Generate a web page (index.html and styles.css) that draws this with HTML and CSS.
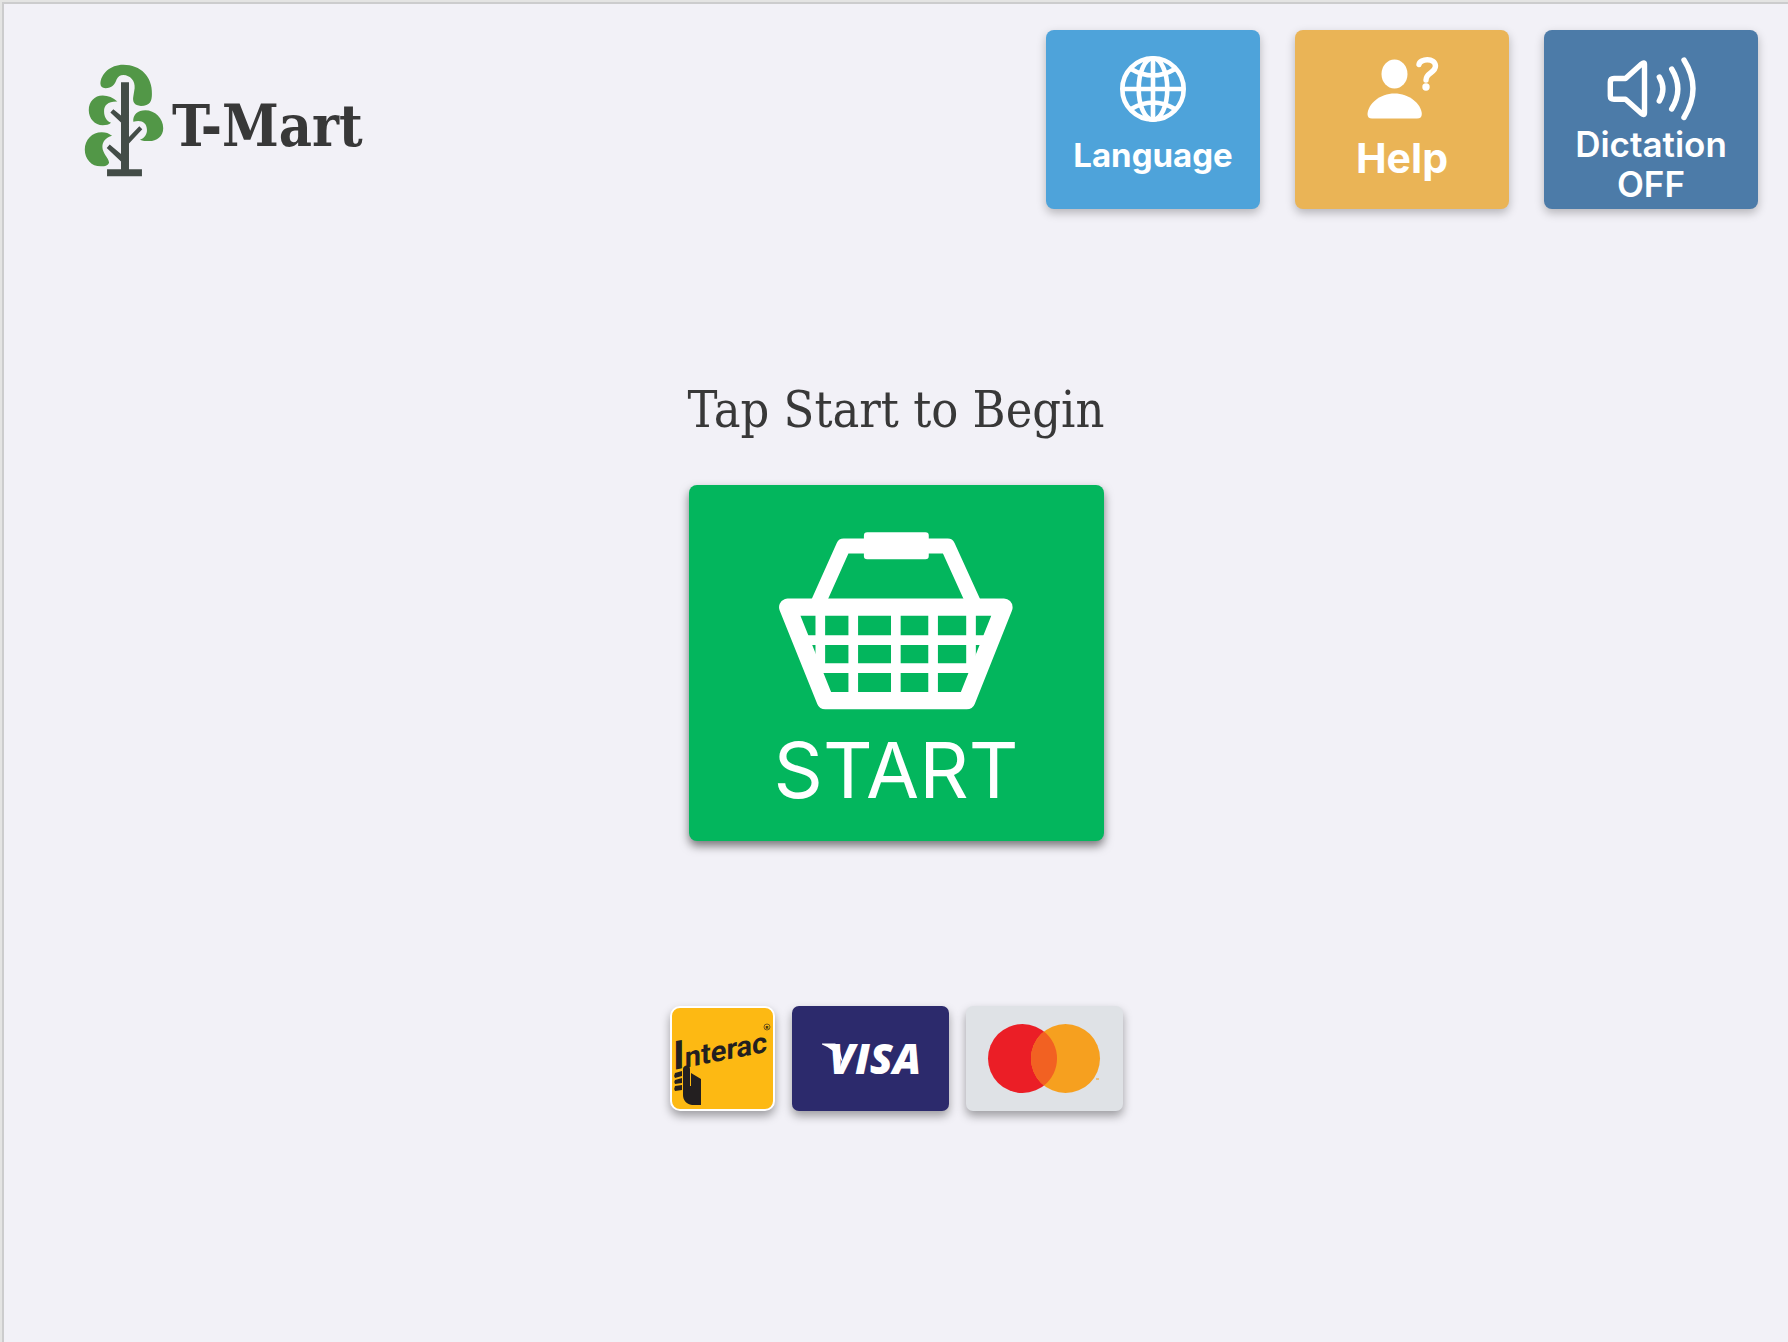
FILE: index.html
```html
<!DOCTYPE html>
<html lang="en">
<head>
<meta charset="utf-8">
<meta name="viewport" content="width=device-width, initial-scale=1">
<title>T-Mart</title>
<link rel="stylesheet" href="styles.css">
</head>
<body>
<div class="screen">
  <header class="top">
    <div class="brand">
      <svg class="brand-tree" viewBox="42 42 240 340" aria-hidden="true">
        <g fill="#529747">
          <path d="M91 101C92 72 120 44 160 44C212 44 248 80 246 132C246 154 240 168 213 168C193 168 187 155 190 140L194 115C196 92 181 76 160 75C151 75 144 79 140 88C134 104 126 115 106 115C97 115 91 110 91 101Z"/>
          <path d="M142 155C130 144 114 137 98 137C73 137 56 156 56 181C56 206 74 226 98 226C108 226 117 225 123 219C109 213 102 200 102 184C102 166 114 154 142 155Z"/>
          <path d="M190 216C188 194 204 181 226 181C255 181 280 205 280 235C280 260 260 274 238 274C227 274 218 274 210 270C224 265 232 253 231 239C230 217 213 209 190 216Z"/>
          <path d="M126 258C116 250 108 247 95 247C66 247 44 269 44 299C44 328 64 350 92 350C106 350 115 346 117 338C116 326 97 310 97 292C97 276 107 263 126 258Z"/>
        </g>
        <path fill="#434c47" d="M153 97H177V262L208 229L217 238L177 281V359H216V380H111V359H153V335L110 295L119 284L153 313V218L121 188L130 178L153 197Z"/>
      </svg>
      <span class="brand-name">T-Mart</span>
    </div>
    <nav class="actions" aria-label="Assistance">
      <button type="button" class="tile tile-language">
        <svg class="tile-icon" viewBox="0 0 100 70" fill="none" stroke="#fff" stroke-width="4.6" aria-hidden="true">
          <circle cx="50" cy="35" r="30.7"/>
          <ellipse cx="50" cy="35" rx="14.3" ry="30.7"/>
          <path d="M50 4V66M19 35H81M28 15Q50 28 72 15M28 55Q50 42 72 55"/>
        </svg>
        <span class="label label-language">Language</span>
      </button>
      <button type="button" class="tile tile-help">
        <svg class="tile-icon" viewBox="0 0 100 70" aria-hidden="true">
          <g fill="#fff">
            <ellipse cx="42.500" cy="20" rx="13" ry="14.500"/>
            <path d="M15.500 60C16 50 28 39.500 42.500 39.500S69.500 50 69.800 60Q69.800 64.500 65 64.500H20Q15.500 64.500 15.500 60Z"/>
            <circle cx="74" cy="33" r="3.700"/>
          </g>
          <path d="M67 10.500C68 4.500 83 3.500 83.500 12C83.500 19 74 18.500 74 26" fill="none" stroke="#fff" stroke-width="5.400" stroke-linecap="round"/>
        </svg>
        <span class="label label-help">Help</span>
      </button>
      <button type="button" class="tile tile-dictation">
        <svg class="tile-icon" viewBox="-1 0 100 70" fill="none" stroke="#fff" stroke-width="5.400" stroke-linecap="round" stroke-linejoin="round" aria-hidden="true">
          <path d="M8.300 28Q8.300 24.500 12 24.500H23.500L39.500 10Q42.500 7.500 42.500 10.500V58.500Q42.500 62 39.500 59.500L23.500 45.200H12Q8.300 45.200 8.300 42Z"/>
          <path d="M57.300 23Q64.500 35 57.300 47M69.700 15Q82 35 69.700 55M82 6Q100 34.500 82 63.500"/>
        </svg>
        <span class="label label-dictation">Dictation<br>OFF</span>
      </button>
    </nav>
  </header>

  <main class="welcome">
    <h1 class="prompt">Tap Start to Begin</h1>
    <button type="button" class="start">
      <svg class="basket" viewBox="297 170 703 535" aria-hidden="true">
        <rect x="552" y="171" width="195" height="81" rx="10" fill="#fff"/>
        <g fill="none" stroke="#fff" stroke-linejoin="round">
          <path stroke-width="45" d="M414 384L491 212H804L882 384"/>
          <path stroke-width="52" d="M323 396H973L861 677H436Z"/>
          <path stroke-width="29" d="M421 410V590M520 410V670M648 410V670M760 410V670M874 410V590M370 495H925M405 579H890"/>
        </g>
      </svg>
      <span class="start-label">START</span>
    </button>
    <ul class="cards" aria-label="Accepted payment methods">
      <li class="card card-interac">
        <svg viewBox="0 0 101 101" role="img" aria-label="Interac">
          <g fill="#231f20">
            <text class="interac-text" transform="translate(1 62) skewY(-11)" x="0" y="0"><tspan class="interac-initial">I</tspan>nterac</text>
            <path d="M11 61C11 57 18 56 18 61V78H19V65L29 71V97H20C14 96 11 92 11 87Z"/>
            <path d="M10 63L3 65Q1.500 67.500 3 70L10 68ZM10 70L3 72Q1.500 74 3 76L10 75ZM10 77L3 78Q1.500 81 3 83L10 82Z"/>
          </g>
          <circle cx="95" cy="19" r="3" fill="none" stroke="#231f20" stroke-width=".6"/>
          <text class="interac-mark" x="93.500" y="20.500">R</text>
        </svg>
      </li>
      <li class="card card-visa">
        <svg viewBox="0 0 157 105" role="img" aria-label="Visa">
          <path fill="#fff" d="M30 37.500H43Q46 38 47 41L51 57Q43 43 30 38.500Z"/>
          <text class="visa-text" x="37" y="68">VISA</text>
        </svg>
      </li>
      <li class="card card-mastercard">
        <svg viewBox="0 0 157 105" role="img" aria-label="Mastercard">
          <circle cx="56.500" cy="52.500" r="34.500" fill="#eb1e26"/>
          <circle cx="99.500" cy="52.500" r="34.500" fill="#f6a01f"/>
          <path fill="#f26122" d="M78 25.500A34.500 34.500 0 0 1 78 79.500A34.500 34.500 0 0 1 78 25.500Z"/>
          <path d="M130 73H133" stroke="#f6a01f"/>
        </svg>
      </li>
    </ul>
  </main>
</div>
</body>
</html>
```
FILE: styles.css
```css
* {
  box-sizing: border-box;
}

body {
  margin: 0;
  padding: 2px 0 0 2px;
  background: #e4e4e3;
}

.screen {
  min-height: calc(100vh - 2px);
  border: solid #cccccd;
  border-width: 2px 0 0 2px;
  background: #f2f1f7;
}

button {
  border: 0;
  padding: 0;
  color: #fff;
  font-family: Inter, "Liberation Sans", sans-serif;
  cursor: pointer;
}

.top {
  display: flex;
  justify-content: space-between;
  align-items: flex-start;
  padding: 26px 30px 0 80px;
}

.brand {
  display: flex;
  align-items: center;
  gap: 8px;
  padding-top: 34px;
}

.brand-tree {
  width: 80px;
  height: 113px;
}

.brand-name {
  padding-top: 10px;
  color: #383838;
  font: bold 57px/68px "DejaVu Serif Condensed", "DejaVu Serif", serif;
}

.actions {
  display: flex;
  gap: 35px;
}

.tile {
  display: flex;
  flex-direction: column;
  align-items: center;
  justify-content: flex-start;
  width: 214px;
  height: 179px;
  padding-top: 24px;
  border-radius: 8px;
  box-shadow: 0 4px 10px rgba(0, 0, 0, 0.25);
}

.tile-language {
  background: #4ea3da;
}

.tile-help {
  background: #eab456;
}

.tile-dictation {
  background: #4c7ba8;
}

.tile-icon {
  width: 100px;
  height: 70px;
}

.label-language {
  font-size: 33px;
  font-weight: 700;
  line-height: 62px;
}

.label-help {
  font-size: 41px;
  font-weight: 700;
  line-height: 68px;
}

.label-dictation {
  font-size: 35px;
  font-weight: 600;
  line-height: 40px;
}

.welcome {
  display: flex;
  flex-direction: column;
  align-items: center;
  padding: 171px 20px 80px;
}

.prompt {
  margin: 0 0 45px;
  color: #383838;
  font: 400 50px/60px "DejaVu Serif Condensed", "DejaVu Serif", serif;
}

.start {
  display: flex;
  flex-direction: column;
  align-items: center;
  gap: 14px;
  width: 415px;
  height: 356px;
  padding-top: 47px;
  border-radius: 8px;
  background: #03b65d;
  box-shadow: 0 5px 10px rgba(0, 0, 0, 0.5);
}

.basket {
  width: 234px;
  height: 178px;
}

.start-label {
  font-size: 77px;
  font-weight: 400;
  line-height: 92px;
}

.cards {
  display: flex;
  gap: 17px;
  margin: 165px 0 0;
  padding: 0;
  list-style: none;
}

.card {
  width: 157px;
  height: 105px;
  border-radius: 7px;
  box-shadow: 0 5px 10px rgba(0, 0, 0, 0.35);
}

.card svg {
  display: block;
  width: 100%;
  height: 100%;
}

.card-interac {
  width: 105px;
  border: 2px solid #fff;
  border-radius: 10px;
  background: #fdb913;
}

.card-visa {
  background: #2c2a6c;
}

.card-mastercard {
  background: #dfe2e6;
}

.interac-text {
  font: bold 29px Roboto, "Liberation Sans", sans-serif;
}

.interac-initial {
  font-size: 40px;
}

.interac-mark {
  font: bold 4px "Liberation Sans", sans-serif;
}

.visa-text {
  fill: #fff;
  font: italic 800 42px "Open Sans", sans-serif;
}
```
